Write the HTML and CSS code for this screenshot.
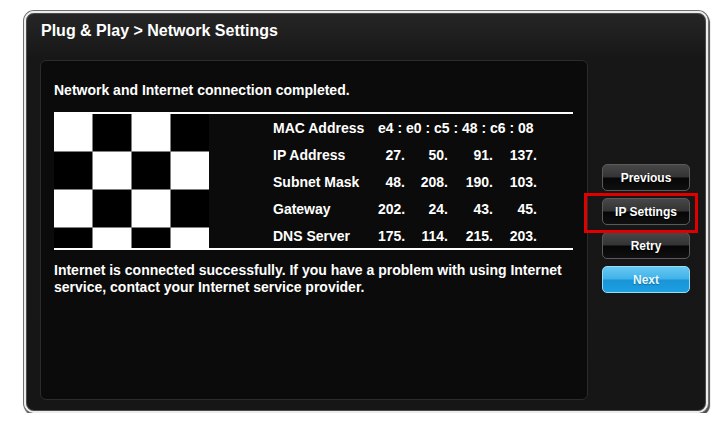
FILE: index.html
```html
<!DOCTYPE html>
<html lang="en">
<head>
    <meta charset="UTF-8">
    <meta name="viewport" content="width=device-width, initial-scale=1.0">
    <title>Plug &amp; Play - Network Settings</title>
    <link rel="stylesheet" href="styles.css">
</head>
<body>

    <!-- Main window frame -->
    <div class="frame">
        <h1 class="title">Plug &amp; Play &gt; Network Settings</h1>

        <div class="main">
            <!-- Result panel -->
            <div class="panel">
                <p class="status">Network and Internet connection completed.</p>

                <div class="info">
                    <!-- Placeholder picture -->
                    <div class="code">
                        <span class="w"></span><span class="b"></span><span class="w"></span><span class="b"></span>
                        <span class="b"></span><span class="w"></span><span class="b"></span><span class="w"></span>
                        <span class="w"></span><span class="b"></span><span class="w"></span><span class="b"></span>
                        <span class="b"></span><span class="w"></span><span class="b"></span><span class="w"></span>
                    </div>

                    <!-- Connection details -->
                    <div class="details">
                        <span class="label">MAC Address</span>
                        <span class="mac">e4 : e0 : c5 : 48 : c6 : 08</span>

                        <span class="label">IP Address</span>
                        <span class="num">27.</span><span class="num">50.</span><span class="num">91.</span><span class="num">137.</span>

                        <span class="label">Subnet Mask</span>
                        <span class="num">48.</span><span class="num">208.</span><span class="num">190.</span><span class="num">103.</span>

                        <span class="label">Gateway</span>
                        <span class="num">202.</span><span class="num">24.</span><span class="num">43.</span><span class="num">45.</span>

                        <span class="label">DNS Server</span>
                        <span class="num">175.</span><span class="num">114.</span><span class="num">215.</span><span class="num">203.</span>
                    </div>
                </div>

                <p class="note">Internet is connected successfully. If you have a problem with using Internet service, contact your Internet service provider.</p>
            </div>

            <!-- Navigation buttons -->
            <div class="side">
                <button class="btn">Previous</button>
                <div class="highlight">
                    <button class="btn">IP Settings</button>
                </div>
                <button class="btn">Retry</button>
                <button class="btn btn-next">Next</button>
            </div>
        </div>
    </div>

</body>
</html>
```

FILE: styles.css
```css
/* Page */
body {
    margin: 0;
    background: #ffffff;
    font-family: "Liberation Sans", Arial, sans-serif;
    font-weight: bold;
    color: #ffffff;
}

/* Outer window with the light double edge */
.frame {
    box-sizing: border-box;
    width: 684px;
    height: 402px;
    margin: 11px 0 0 24px;
    border: 2px solid #ececec;
    border-radius: 10px;
    background: linear-gradient(#262626, #171717 45px, #161616);
    box-shadow: 0 0 0 1px #6f6f6f, 1px 2px 1px 1px #4a4a4a, inset 0 0 0 1px #4a4a4a;
}

/* Window title */
.title {
    margin: 0;
    padding: 8px 0 0 15px;
    font-size: 16px;
    line-height: 20px;
    font-weight: bold;
}

.main {
    display: flex;
    margin-top: 19px;
}

/* Dark content panel */
.panel {
    box-sizing: border-box;
    width: 548px;
    height: 340px;
    margin-left: 14px;
    padding: 21px 13px 0 13px;
    background: #0b0b0b;
    border: 1px solid #2c2c2c;
    border-radius: 6px;
}

.status {
    margin: 0 0 14px;
    font-size: 14px;
    line-height: 16px;
}

/* Picture + details, between two white rules */
.info {
    display: flex;
    width: 519px;
    height: 134px;
    border-top: 2px solid #ffffff;
    border-bottom: 2px solid #ffffff;
}

.code {
    display: grid;
    grid-template-columns: repeat(4, 38px);
    grid-template-rows: 37px 37px 37px 20px;
    gap: 1px;
    width: 155px;
    height: 134px;
    background: #808080;
    overflow: hidden;
}

.code .w {
    background: #ffffff;
}

.code .b {
    background: #000000;
}

.details {
    display: grid;
    grid-template-columns: 105px 27px 43px 45px 44px;
    grid-auto-rows: 26.8px;
    align-items: center;
    margin-left: 64px;
    padding-top: 1px;
    font-size: 14px;
    white-space: nowrap;
}

.details .mac {
    grid-column: span 4;
}

.details .num {
    text-align: right;
}

.note {
    margin: 12px 0 0;
    width: 519px;
    font-size: 14px;
    line-height: 17px;
}

/* Right column of buttons */
.side {
    display: flex;
    flex-direction: column;
    gap: 7px;
    margin-left: 14px;
    padding-top: 104px;
}

.btn {
    box-sizing: border-box;
    display: block;
    width: 88px;
    height: 27px;
    padding: 0;
    border: 1px solid #5a5a5a;
    border-radius: 5px;
    background: linear-gradient(#474747, #333333 48%, #060606 52%, #101010);
    color: #ffffff;
    font-family: "Liberation Sans", Arial, sans-serif;
    font-size: 12px;
    font-weight: bold;
    text-shadow: 0 1px 1px #000000;
}

.btn-next {
    border-color: #9adcf8;
    background: linear-gradient(#66c8f2, #40b2e8 48%, #1795d8 52%, #1d9fe0);
    color: #eaf8ff;
    text-shadow: 0 1px 1px #0d6fa3;
}

/* Red annotation box around the IP Settings button */
.highlight {
    position: relative;
}

.highlight::before {
    content: "";
    position: absolute;
    top: -5px;
    left: -18px;
    right: -8px;
    bottom: -8px;
    border: 3px solid #e00000;
}
```
